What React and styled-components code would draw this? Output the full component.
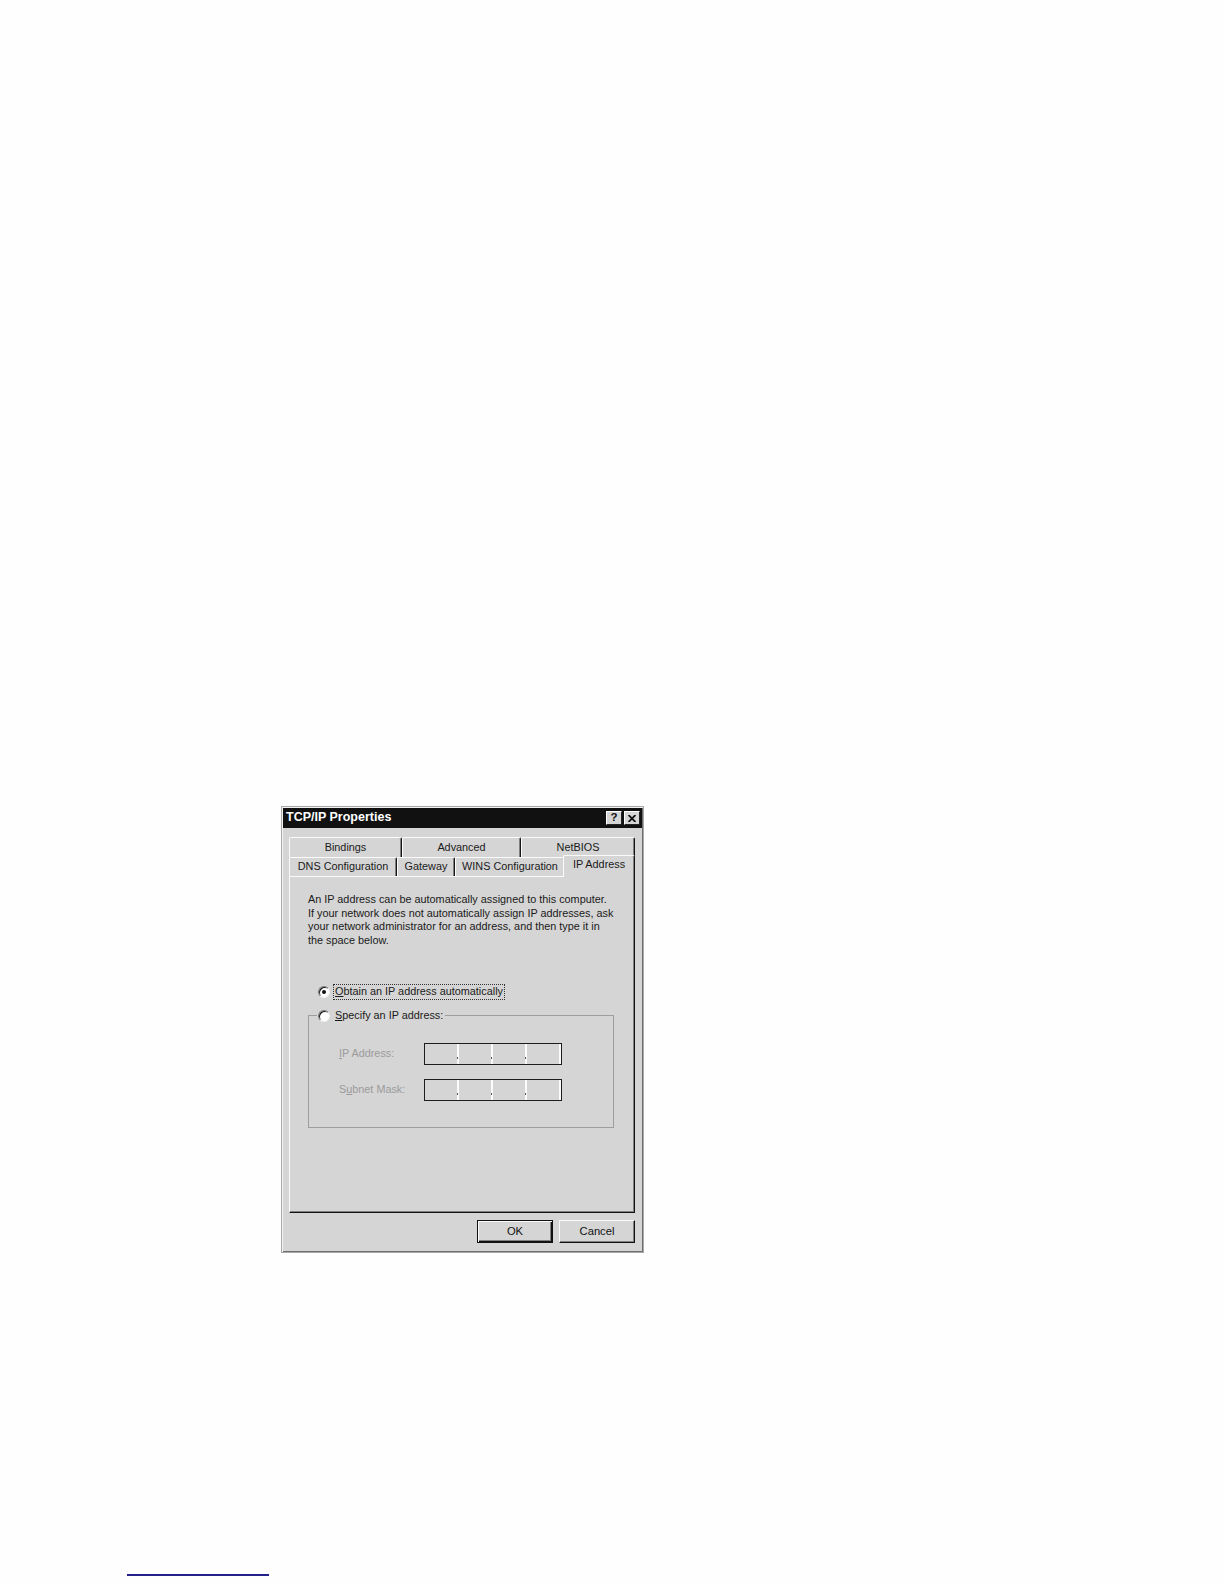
import React from "react";
import styled, { createGlobalStyle } from "styled-components";

const GlobalStyle = createGlobalStyle`
  html, body {
    margin: 0;
    padding: 0;
    background: #fefefe;
  }
  body {
    font-family: "Liberation Sans", Arial, sans-serif;
  }
`;

const Page = styled.div`
  width: 1224px;
  min-height: 1584px;
  display: flex;
  flex-direction: column;
  align-items: flex-start;
`;

/* ===== DIALOG FRAME ===== */
const Dialog = styled.div`
  margin: 806px 0 0 281px;
  width: 363px;
  box-sizing: border-box;
  border: 1px solid #a8a8a8;
  padding: 1px;
  background: #d5d5d5;
  box-shadow: inset 1px 1px 0 #f2f2f2, inset -1px -1px 0 #6e6e6e;
  display: flex;
  flex-direction: column;
  font-size: 10.85px;
  line-height: 13.7px;
  color: #1a1a1a;
`;

const TitleBar = styled.div`
  height: 20px;
  background: #111;
  display: flex;
  align-items: center;
  padding: 0 2px 0 3px;
  gap: 2px;
`;

const Title = styled.div`
  flex: 1;
  color: #fff;
  font-weight: 700;
  font-size: 12.5px;
  white-space: nowrap;
`;

const CaptionButton = styled.div`
  width: 16px;
  height: 14px;
  box-sizing: border-box;
  background: #d5d5d5;
  border: 1px solid;
  border-color: #fff #222 #222 #fff;
  display: flex;
  align-items: center;
  justify-content: center;
  font-weight: 700;
  font-size: 11.5px;
  color: #111;
`;

const Body = styled.div`
  padding: 9px 7px 8px 6px;
  display: flex;
  flex-direction: column;
`;

/* ===== TABS ===== */
const TabRow = styled.div`
  display: flex;
  height: ${(p) => p.$h}px;
`;

const Tab = styled.div`
  width: ${(p) => p.$w}px;
  box-sizing: border-box;
  flex: none;
  border-top: 1px solid #fbfbfb;
  border-left: 1px solid #fbfbfb;
  border-right: 1px solid #151515;
  box-shadow: inset -1px 0 0 #7e7e7e;
  border-radius: 2px 2px 0 0;
  display: flex;
  align-items: flex-end;
  justify-content: center;
  padding-bottom: 2px;
  white-space: nowrap;
`;

const ActiveTab = styled(Tab)`
  position: relative;
  z-index: 1;
  height: 22px;
  margin: -2px 0 0 -2px;
  padding-bottom: 5px;
  background: #d5d5d5;
`;

const Panel = styled.div`
  height: 337px;
  box-sizing: border-box;
  border-top: 1px solid #fbfbfb;
  border-left: 1px solid #fbfbfb;
  border-right: 1px solid #141414;
  border-bottom: 1px solid #141414;
  box-shadow: inset -1px -1px 0 #808080;
  padding: 16px 10px 0 18px;
  display: flex;
  flex-direction: column;
  align-items: flex-start;
`;

const Intro = styled.p`
  margin: 0;
  white-space: nowrap;
`;

/* ===== RADIOS ===== */
const RadioRow = styled.div`
  display: flex;
  align-items: center;
  height: 14px;
  gap: ${(p) => p.$gap}px;
  padding-left: ${(p) => p.$indent}px;
  margin-top: ${(p) => p.$top || 0}px;
`;

const Radio = styled.span`
  flex: none;
  width: 12px;
  height: 12px;
  box-sizing: border-box;
  border-radius: 50%;
  background: #fff;
  border: 1px solid;
  border-color: #777 #efefef #efefef #777;
  box-shadow: inset 1px 1px 0 #1a1a1a;
  display: flex;
  align-items: center;
  justify-content: center;

  &::after {
    content: "";
    width: 4px;
    height: 4px;
    border-radius: 50%;
    background: ${(p) => (p.$checked ? "#111" : "transparent")};
  }
`;

const FocusLabel = styled.span`
  outline: 1px dotted #333;
  outline-offset: 0;
  padding: 0 1px;
  white-space: nowrap;
`;

const Key = styled.u`
  text-decoration-thickness: 1px;
  text-underline-offset: 1px;
`;

/* ===== GROUP BOX ===== */
const Group = styled.fieldset`
  margin: 10px 0 0 0;
  width: 306px;
  height: 119px;
  box-sizing: border-box;
  border: 1px solid #9e9e9e;
  padding: 20px 0 0 0;
  display: flex;
  flex-direction: column;
  gap: 14px;
`;

const Legend = styled.legend`
  margin-left: 8px;
  padding: 0 2px 0 1px;
`;

const FieldRow = styled.div`
  display: flex;
  align-items: center;
  height: 22px;
  padding-left: 30px;
`;

const FieldLabel = styled.span`
  width: 85px;
  flex: none;
  color: #9b9b9b;
  white-space: nowrap;
`;

const IpBox = styled.div`
  width: 138px;
  height: 22px;
  box-sizing: border-box;
  border: 1px solid #1c1c1c;
  display: flex;
  background: #d5d5d5;
`;

const Octet = styled.span`
  width: 32px;
  flex: none;
`;

const Sep = styled.span`
  width: 2px;
  flex: none;
  background: #fbfbfb;
  display: flex;
  align-items: flex-end;
  padding-bottom: 5px;
  box-sizing: border-box;

  &::before {
    content: "";
    width: 1px;
    height: 2px;
    background: ${(p) => (p.$dot ? "#555" : "transparent")};
  }
`;

/* ===== BUTTONS ===== */
const ButtonRow = styled.div`
  display: flex;
  justify-content: flex-end;
  gap: 6px;
  margin-top: 7px;
`;

const PushButton = styled.div`
  width: 76px;
  height: 23px;
  box-sizing: border-box;
  display: flex;
  align-items: center;
  justify-content: center;
  background: #d5d5d5;
  border: 1px solid;
  border-color: ${(p) => (p.$default ? "#111" : "#fbfbfb #111 #111 #fbfbfb")};
  box-shadow: ${(p) =>
    p.$default
      ? "inset 1px 1px 0 #fbfbfb, inset -1px -1px 0 #111, inset -2px -2px 0 #808080"
      : "inset -1px -1px 0 #808080"};
  color: #111;
  font-size: 11.2px;
`;

const Footnote = styled.div`
  margin: 321px 0 0 127px;
  width: 142px;
  height: 2px;
  background: #22228a;
`;

function IpField() {
  return (
    <IpBox>
      <Octet />
      <Sep $dot />
      <Octet />
      <Sep $dot />
      <Octet />
      <Sep $dot />
      <Octet />
      <Sep />
    </IpBox>
  );
}

export default function App() {
  return (
    <Page>
      <GlobalStyle />
      <Dialog>
        <TitleBar>
          <Title>TCP/IP Properties</Title>
          <CaptionButton>?</CaptionButton>
          <CaptionButton>
            <svg width="8" height="7" viewBox="0 0 8 7">
              <path d="M0.5 0 L7.5 7 M7.5 0 L0.5 7" stroke="#111" strokeWidth="1.8" />
            </svg>
          </CaptionButton>
        </TitleBar>

        <Body>
          <TabRow $h={20}>
            <Tab $w={113}>Bindings</Tab>
            <Tab $w={119}>Advanced</Tab>
            <Tab $w={114}>NetBIOS</Tab>
          </TabRow>
          <TabRow $h={19}>
            <Tab $w={108}>DNS Configuration</Tab>
            <Tab $w={58}>Gateway</Tab>
            <Tab $w={110}>WINS Configuration</Tab>
            <ActiveTab $w={72}>IP Address</ActiveTab>
          </TabRow>

          <Panel>
            <Intro>
              An IP address can be automatically assigned to this computer.
              <br />
              If your network does not automatically assign IP addresses, ask
              <br />
              your network administrator for an address, and then type it in
              <br />
              the space below.
            </Intro>

            <RadioRow $gap={4} $indent={10} $top={37}>
              <Radio $checked />
              <FocusLabel>
                <Key>O</Key>btain an IP address automatically
              </FocusLabel>
            </RadioRow>

            <Group>
              <Legend>
                <RadioRow $gap={5} $indent={0}>
                  <Radio />
                  <span>
                    <Key>S</Key>pecify an IP address:
                  </span>
                </RadioRow>
              </Legend>
              <FieldRow>
                <FieldLabel>
                  <Key>I</Key>P Address:
                </FieldLabel>
                <IpField />
              </FieldRow>
              <FieldRow>
                <FieldLabel>
                  S<Key>u</Key>bnet Mask:
                </FieldLabel>
                <IpField />
              </FieldRow>
            </Group>
          </Panel>

          <ButtonRow>
            <PushButton $default>OK</PushButton>
            <PushButton>Cancel</PushButton>
          </ButtonRow>
        </Body>
      </Dialog>
      <Footnote />
    </Page>
  );
}
